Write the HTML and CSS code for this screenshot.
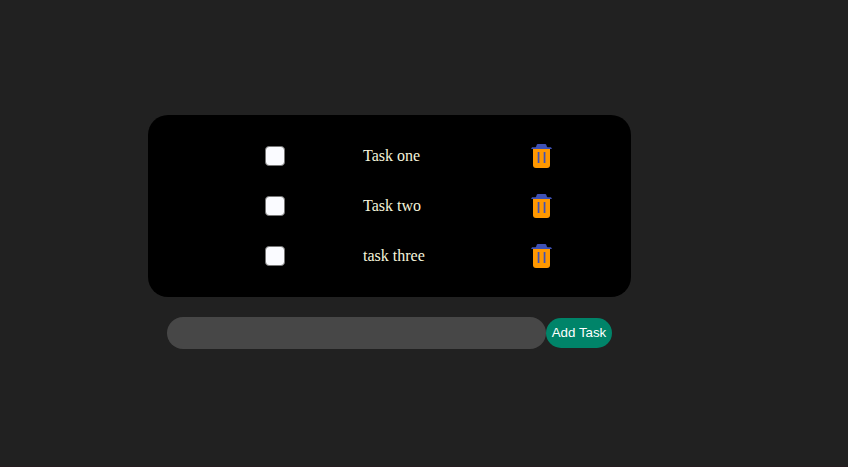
FILE: index.html
```html
<!DOCTYPE html>
<html lang="en">
<head>
<meta charset="utf-8">
<title>Tasks</title>
<link rel="stylesheet" href="styles.css">
</head>
<body>
<svg width="0" height="0" class="sprite" aria-hidden="true">
  <symbol id="trash" viewBox="0 0 21 25">
    <path fill="#ff9800" d="M2 5h17v17a3 3 0 0 1-3 3H5a3 3 0 0 1-3-3z"/>
    <path fill="#3f51b5" d="M1 4.300h3.500L5.500 3V2L6.500 1h8L15.500 2V3L16.500 4.300H20L21 6H0zM6.700 9h1.700v11H6.700zM12.700 9h1.700v11H12.700z"/>
  </symbol>
</svg>
<main class="app">
  <ul class="tasks">
    <li class="task"><input type="checkbox" class="check"><span class="name">Task one</span><svg class="trash"><use href="#trash"/></svg></li>
    <li class="task"><input type="checkbox" class="check"><span class="name">Task two</span><svg class="trash"><use href="#trash"/></svg></li>
    <li class="task"><input type="checkbox" class="check"><span class="name">task three</span><svg class="trash"><use href="#trash"/></svg></li>
  </ul>
  <form class="add"><input type="text" class="field"><button type="button" class="button">Add Task</button></form>
</main>
</body>
</html>
```
FILE: styles.css
```css
* { box-sizing: border-box; }
html { background: #212121; }
body {
  margin: 0;
  min-height: 467px;
  background: #212121;
  border-bottom: 1px solid #261c20;
  font-family: "Liberation Serif", "Times New Roman", serif;
}
.sprite { display: block; }
.app { width: 483px; margin-left: 148px; padding-top: 115px; }
.tasks {
  list-style: none;
  margin: 0;
  padding: 16px 0;
  height: 182px;
  border-radius: 20px;
  background: #000;
}
.task {
  display: grid;
  grid-template-columns: 98px 168px 21px;
  align-items: center;
  height: 50px;
  padding-left: 117px;
}
.check {
  appearance: none;
  width: 20px;
  height: 20px;
  margin: 0;
  border: 1px solid #767676;
  border-radius: 4px;
  background: #fafbff;
}
.name { color: beige; font-size: 16px; line-height: 18px; }
.trash { display: block; width: 21px; height: 25px; margin-bottom: 1px; }
.add { display: flex; align-items: center; margin: 20px 0 0 19px; }
.field {
  width: 379px;
  height: 32px;
  padding: 0 12px;
  border: 0;
  border-radius: 16px;
  background: #474747;
  color: white;
}
.button {
  width: 66px;
  height: 30px;
  padding: 0 0 2px;
  border: 0;
  border-radius: 15px;
  background: #008469;
  color: white;
  font: 13.333px "Liberation Sans", Arial, sans-serif;
}
```
